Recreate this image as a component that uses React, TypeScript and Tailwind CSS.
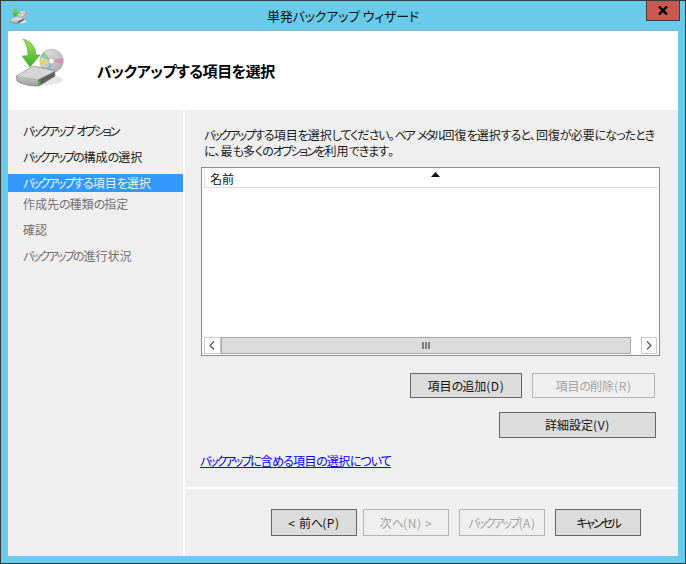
const font = { fontFamily: '"Noto Sans CJK JP", "Noto Sans", sans-serif' };

// kana runs narrower than kanji in the original UI font, latin a bit wider
function Jp({ text }: { text: string }) {
    const parts = text.split(/([ァ-ヶー]+|[ぁ-ん]+|[ -~]+)/).filter(Boolean);
    return (
        <>
            {parts.map((part, index) => {
                if (/^[ァ-ヶー]/.test(part)) {
                    return <span key={index} className="tracking-[-2.2px]">{part}</span>;
                }
                if (/^[ぁ-ん]/.test(part)) {
                    return <span key={index} className="tracking-[-1px]">{part}</span>;
                }
                if (/^[ -~]/.test(part)) {
                    return <span key={index} className="tracking-[0.6px]">{part}</span>;
                }
                return <span key={index}>{part}</span>;
            })}
        </>
    );
}

function WizardIcon({ size }: { size: number }) {
    return (
        <svg width={size} height={size} viewBox="0 0 48 48">
            <defs>
                <linearGradient id="arrowFill" x1="0" y1="0" x2="0" y2="1">
                    <stop offset="0" stopColor="#a6e05a" />
                    <stop offset="1" stopColor="#3bae2b" />
                </linearGradient>
                <linearGradient id="driveFill" x1="0" y1="0" x2="0" y2="1">
                    <stop offset="0" stopColor="#e4e4e4" />
                    <stop offset="1" stopColor="#a0a0a0" />
                </linearGradient>
                <linearGradient id="discFill" x1="0" y1="0" x2="1" y2="1">
                    <stop offset="0" stopColor="#e8e8e8" />
                    <stop offset="1" stopColor="#a8a8a8" />
                </linearGradient>
            </defs>
            <ellipse cx="29" cy="41" rx="18" ry="5" fill="#e6e6e6" />
            <circle cx="35.5" cy="22" r="11.7" fill="url(#discFill)" stroke="#8f8f8f" strokeWidth="0.5" />
            <path d="M35.5 22 L24.5 18 A11.7 11.7 0 0 1 28 13 Z" fill="#86cf95" />
            <path d="M35.5 22 L25 27 A11.7 11.7 0 0 1 24 21 Z" fill="#e6d56e" />
            <path d="M35.5 22 L47 19 A11.7 11.7 0 0 1 47 25 Z" fill="#d392ad" />
            <path d="M35.5 22 L30 32 A11.7 11.7 0 0 0 35 33.5 Z" fill="#8fb3e0" />
            <circle cx="35.5" cy="22" r="3" fill="#f6f6f6" stroke="#8a8a8a" strokeWidth="0.5" />
            <path d="M0.5 37 L17 27 L38.5 31.5 L39 37 L23 47 Q8 47 1 42 Z" fill="url(#driveFill)" stroke="#6a6a6a" strokeWidth="0.6" />
            <path d="M1.5 36.5 L17 28 L37 32 L22 40 Z" fill="#d6d6d6" />
            <path d="M22 41 L38.5 32.5 L39 37 L23 46.5 Z" fill="#5f5f5f" />
            <path d="M22.5 42 L24.5 41 L24.5 45 L22.5 46 Z" fill="#45c030" />
            <path d="M7 0 C15 2 20 8 20 16 L24 16 L14 28 L6 17 L12 16.5 C12 10 10 4 7 0 Z" fill="url(#arrowFill)" stroke="#4a9c32" strokeWidth="0.5" />
        </svg>
    );
}

function Btn({ label, disabled, className }: { label: string; disabled?: boolean; className: string }) {
    return (
        <div
            className={`flex items-center justify-center text-[12px] border ${
                disabled ? 'border-[#b4b4b4] bg-[#efefef] text-[#a3a3a3]' : 'border-[#666666] bg-[#dcdcdc] text-[#111111]'
            } ${className}`}
        >
            <span className="whitespace-pre">
                <Jp text={label} />
            </span>
        </div>
    );
}

function SideItem({ label, className }: { label: string; className: string }) {
    return (
        <div className={`pl-[15px] flex items-center text-[12px] ${className}`}>
            <span>
                <Jp text={label} />
            </span>
        </div>
    );
}

export default function App() {
    return (
        <div
            className="w-[686px] h-[564px] bg-[#69cbe9] border border-[#353a3e] flex flex-col [font-feature-settings:'palt'] overflow-hidden"
            style={font}
        >
            {/* Title bar */}
            <div className="h-[29px] flex items-start relative shrink-0">
                <div className="ml-[9px] mt-[6px]">
                    <WizardIcon size={17} />
                </div>
                <div className="absolute left-0 right-0 top-[5px] text-center text-[13px] tracking-[-0.2px] text-[#111111]">単発バックアップ ウィザード</div>
                <div className="ml-auto mr-[5px] w-[34px] h-[21px] -mt-px bg-[#c75a50] border border-[#4a3a3a] flex items-center justify-center z-10">
                    <svg width="10" height="9" viewBox="0 0 10 9">
                        <path d="M1 0.5 L9 8.5 M9 0.5 L1 8.5" stroke="#000000" strokeWidth="2.4" />
                    </svg>
                </div>
            </div>

            <div className="mx-[7px] w-[670px] h-[526px] flex flex-col bg-white border-t border-[#8ab4c4]">
                {/* Header */}
                <div className="h-[79px] flex shrink-0">
                    <div className="ml-[8px] mt-[8px]">
                        <WizardIcon size={48} />
                    </div>
                    <div className="ml-[33px] mt-[28px] text-[15px] tracking-[-0.4px] font-bold text-black leading-[24px]">バックアップする項目を選択</div>
                </div>

                <div className="flex flex-1 min-h-0 gap-[2px]">
                    {/* Steps */}
                    <div className="w-[175px] bg-[#efefef] pt-[11px] shrink-0">
                        <SideItem label="バックアップ オプション" className="h-[20px] text-[#222222]" />
                        <SideItem label="バックアップの構成の選択" className="h-[20px] mt-[6px] text-[#222222]" />
                        <SideItem label="バックアップする項目を選択" className="h-[18px] mt-[7px] bg-[#3399ff] text-[#eaf4ff]" />
                        <SideItem label="作成先の種類の指定" className="h-[20px] mt-[2px] text-[#707070]" />
                        <SideItem label="確認" className="h-[20px] mt-[6px] text-[#707070]" />
                        <SideItem label="バックアップの進行状況" className="h-[20px] mt-[6px] text-[#707070]" />
                    </div>

                    {/* Content */}
                    <div className="flex-1 bg-[#efefef] flex flex-col">
                        <div className="h-[377px] pl-[16px] pt-[17px] shrink-0">
                            <p className="ml-[3px] text-[12px] leading-[16px] text-[#1a1a1a] whitespace-pre">
                                <Jp text="バックアップする項目を選択してください。ベア メタル回復を選択すると、回復が必要になったとき" />
                                <br />
                                <Jp text="に、最も多くのオプションを利用できます。" />
                            </p>
                            <div className="mt-[8px] w-[459px] h-[189px] border border-[#8c8c8c] bg-white p-px flex flex-col">
                                <div className="h-[19px] border-l border-b border-[#dedede] ml-px relative text-[12px] text-[#111111] pl-[5px] leading-[19px] shrink-0">
                                    名前
                                    <svg className="absolute left-[226px] top-[3px]" width="9" height="5" viewBox="0 0 9 5">
                                        <path d="M4.5 0 L9 5 L0 5 Z" fill="#111111" />
                                    </svg>
                                </div>
                                <div className="flex-1" />
                                <div className="h-[17px] mx-px flex items-stretch shrink-0">
                                    <div className="w-[17px] border border-[#c8c8c8] flex items-center justify-center">
                                        <svg width="6" height="9" viewBox="0 0 6 9">
                                            <path d="M5 0.5 L1 4.5 L5 8.5" fill="none" stroke="#555555" strokeWidth="1.2" />
                                        </svg>
                                    </div>
                                    <div className="w-[411px] bg-[#dcdcdc] border border-[#a6a6a6] flex items-center justify-center">
                                        <svg width="8" height="7" viewBox="0 0 8 7">
                                            <path d="M1 0 V7 M4 0 V7 M7 0 V7" stroke="#666666" strokeWidth="1.6" />
                                        </svg>
                                    </div>
                                    <div className="w-[10px]" />
                                    <div className="w-[16px] border border-[#c8c8c8] flex items-center justify-center">
                                        <svg width="6" height="9" viewBox="0 0 6 9">
                                            <path d="M1 0.5 L5 4.5 L1 8.5" fill="none" stroke="#555555" strokeWidth="1.2" />
                                        </svg>
                                    </div>
                                </div>
                            </div>
                            <div className="mt-[17px] flex">
                                <Btn label="項目の追加(D)" className="ml-[209px] w-[112px] h-[25px]" />
                                <Btn label="項目の削除(R)" disabled className="ml-[10px] w-[123px] h-[25px]" />
                            </div>
                            <Btn label="詳細設定(V)" className="mt-[14px] ml-[298px] w-[157px] h-[26px]" />
                            <a className="block -ml-px mt-[15px] text-[12px] leading-[16px] tracking-[-0.4px] text-[#0000ff] underline">
                                <Jp text="バックアップに含める項目の選択について" />
                            </a>
                        </div>
                        <div className="h-[2px] bg-white shrink-0" />
                        <div className="flex pt-[20px] pl-[86px]">
                            <Btn label="< 前へ(P)" className="w-[86px] h-[27px]" />
                            <Btn label="次へ(N) >" disabled className="ml-[6px] w-[86px] h-[27px]" />
                            <Btn label="バックアップ(A)" disabled className="ml-[10px] w-[86px] h-[27px]" />
                            <Btn label="キャンセル" className="ml-[10px] w-[86px] h-[27px]" />
                        </div>
                    </div>
                </div>
            </div>
        </div>
    );
}
